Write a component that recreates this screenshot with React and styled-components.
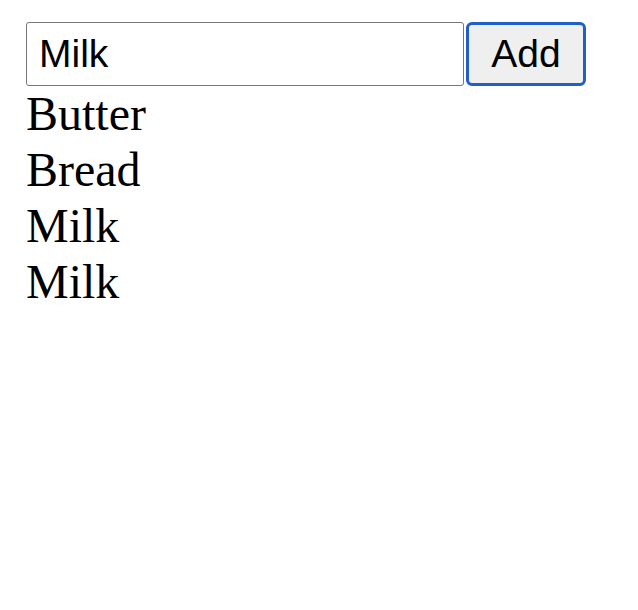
import React, { useState } from "react";
import styled, { createGlobalStyle } from "styled-components";

const Global = createGlobalStyle`
  html, body { margin: 0; padding: 0; background: #fff; }
  body { font-family: "Liberation Serif", "Times New Roman", serif; color: #000; }
`;

const Page = styled.div`
  padding: 22px 26px;
`;

const Form = styled.form`
  display: flex;
  align-items: stretch;
  gap: 2px;
  height: 64px;
`;

const TextInput = styled.input`
  box-sizing: border-box;
  width: 438px;
  height: 64px;
  margin: 0;
  padding: 0 12px;
  border: 1px solid #767676;
  border-radius: 3px;
  background: #fff;
  font-family: "Liberation Sans", Arial, sans-serif;
  font-size: 39px;
  color: #000;
  outline: none;
`;

const AddButton = styled.button`
  box-sizing: border-box;
  width: 120px;
  height: 64px;
  margin: 0;
  padding: 0;
  border: 3px solid #1f5fc8;
  border-radius: 6px;
  background: #efefef;
  font-family: "Liberation Sans", Arial, sans-serif;
  font-size: 39px;
  color: #000;
  display: flex;
  align-items: center;
  justify-content: center;
`;

const List = styled.div`
  display: flex;
  flex-direction: column;
`;

const Item = styled.div`
  font-size: 48px;
  line-height: 56px;
  font-family: "Liberation Serif", "Times New Roman", serif;
`;

export default function App() {
  const [value, setValue] = useState("Milk");
  const items = ["Butter", "Bread", "Milk", "Milk"];
  return (
    <>
      <Global />
      <Page>
        <Form onSubmit={(e) => e.preventDefault()}>
          <TextInput value={value} onChange={(e) => setValue(e.target.value)} />
          <AddButton type="submit">Add</AddButton>
        </Form>
        <List>
          {items.map((it, i) => (
            <Item key={i}>{it}</Item>
          ))}
        </List>
      </Page>
    </>
  );
}
